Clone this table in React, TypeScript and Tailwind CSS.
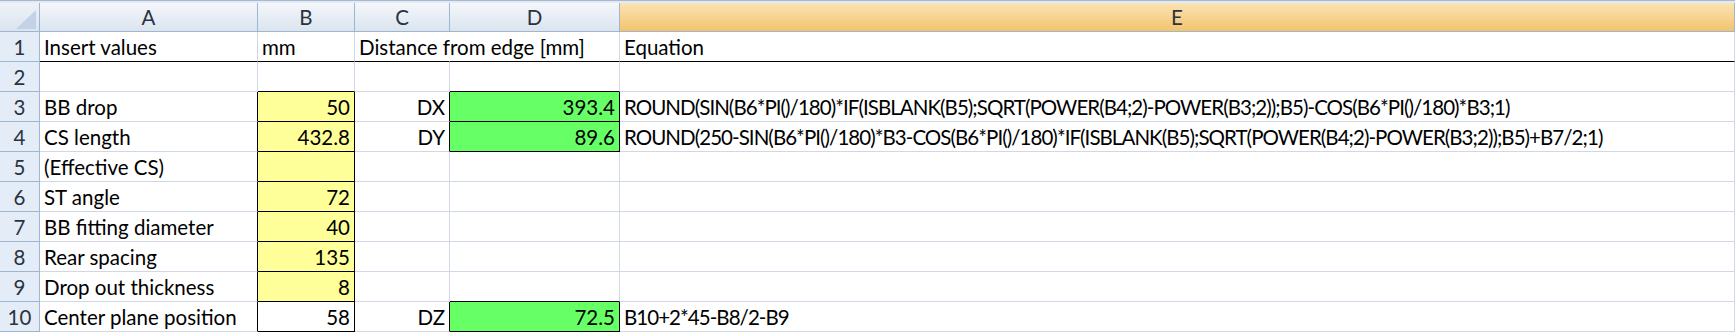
import clsx from "clsx";

type Cell = {
  v?: string;
  right?: boolean;
  fill?: "yellow" | "green";
  box?: boolean;
  spill?: boolean;
  formula?: boolean;
};

const COLUMNS = [
  { name: "A", width: "w-[218px]" },
  { name: "B", width: "w-[97px]" },
  { name: "C", width: "w-[95px]" },
  { name: "D", width: "w-[170px]" },
  { name: "E", width: "flex-1" },
];

const F3 =
  "ROUND(SIN(B6*PI()/180)*IF(ISBLANK(B5);SQRT(POWER(B4;2)-POWER(B3;2));B5)-COS(B6*PI()/180)*B3;1)";
const F4 =
  "ROUND(250-SIN(B6*PI()/180)*B3-COS(B6*PI()/180)*IF(ISBLANK(B5);SQRT(POWER(B4;2)-POWER(B3;2));B5)+B7/2;1)";

const input = (v: string): Cell => ({ v, right: true, fill: "yellow", box: true });
const result = (v: string): Cell => ({ v, right: true, fill: "green", box: true });

const ROWS: Cell[][] = [
  [{ v: "Insert values" }, { v: "mm" }, { v: "Distance from edge [mm]", spill: true }, {}, { v: "Equation" }],
  [{}, {}, {}, {}, {}],
  [{ v: "BB drop" }, input("50"), { v: "DX", right: true }, result("393.4"), { v: F3, formula: true }],
  [{ v: "CS length" }, input("432.8"), { v: "DY", right: true }, result("89.6"), { v: F4, formula: true }],
  [{ v: "(Effective CS)" }, input(""), {}, {}, {}],
  [{ v: "ST angle" }, input("72"), {}, {}, {}],
  [{ v: "BB fitting diameter" }, input("40"), {}, {}, {}],
  [{ v: "Rear spacing" }, input("135"), {}, {}, {}],
  [{ v: "Drop out thickness" }, input("8"), {}, {}, {}],
  [
    { v: "Center plane position" },
    { v: "58", right: true, box: true },
    { v: "DZ", right: true },
    result("72.5"),
    { v: "B10+2*45-B8/2-B9", formula: true },
  ],
];

const boxed = (r: number, c: number) => !!ROWS[r]?.[c]?.box;

function ColumnHeader({ name, width, active }: { name: string; width: string; active: boolean }) {
  return (
    <div
      className={clsx(
        "flex items-center justify-center border-r border-[#9eb6ce] shrink-0",
        width,
        active
          ? "bg-gradient-to-b from-[#fbe3b4] to-[#f2c46c]"
          : "bg-gradient-to-b from-[#f4f7fb] to-[#dbe4ef]",
      )}
    >
      {name}
    </div>
  );
}

function SheetCell({ cell, r, c, width }: { cell: Cell; r: number; c: number; width: string }) {
  const blackRight = boxed(r, c) || boxed(r, c + 1);
  const blackBottom = r === 0 || boxed(r, c) || boxed(r + 1, c);
  // unfilled cells stay transparent so text spilling out of a neighbour shows through
  return (
    <div
      className={clsx(
        "flex items-center h-full border-r border-b whitespace-nowrap shrink-0 px-1",
        width,
        cell.right ? "justify-end" : "justify-start",
        cell.fill === "yellow" && "bg-[#ffff99]",
        cell.fill === "green" && "bg-[#66ff66]",
        cell.formula && "tracking-[-0.95px]",
        cell.spill ? "border-r-transparent" : blackRight ? "border-r-black" : "border-r-[#d0d7e5]",
        blackBottom ? "border-b-black" : "border-b-[#d0d7e5]",
      )}
    >
      {cell.v}
    </div>
  );
}

export default function App() {
  return (
    <div className="w-[1735px] h-[332px] overflow-hidden bg-white font-['Lato',sans-serif] text-[20.5px] leading-6 text-black">
      {/* strip left over from the formula bar */}
      <div className="h-[3px] border-t border-[#a5b8d0] bg-[#e3eaf3]" />

      {/* column headers */}
      <div className="flex h-[29px] border-b border-[#9eb6ce] text-[#2a3340]">
        <div className="w-[40px] shrink-0 flex items-end justify-end pr-[3px] pb-[2px] border-r border-[#9eb6ce] bg-gradient-to-b from-[#eef2f8] to-[#dbe4ef]">
          <svg width="20" height="19" viewBox="0 0 20 19">
            <polygon points="20,0 20,19 0,19" fill="#c3d2e6" />
          </svg>
        </div>
        {COLUMNS.map((col) => (
          <ColumnHeader key={col.name} name={col.name} width={col.width} active={col.name === "E"} />
        ))}
      </div>

      {ROWS.map((row, r) => (
        <div key={r} className="flex h-[30px]">
          <div className="w-[40px] shrink-0 flex items-center justify-center bg-[#e4ecf7] border-r border-b border-[#9eb6ce] text-[#2a3340]">
            {r + 1}
          </div>
          {row.map((cell, c) => (
            <SheetCell key={c} cell={cell} r={r} c={c} width={COLUMNS[c].width} />
          ))}
        </div>
      ))}
    </div>
  );
}
